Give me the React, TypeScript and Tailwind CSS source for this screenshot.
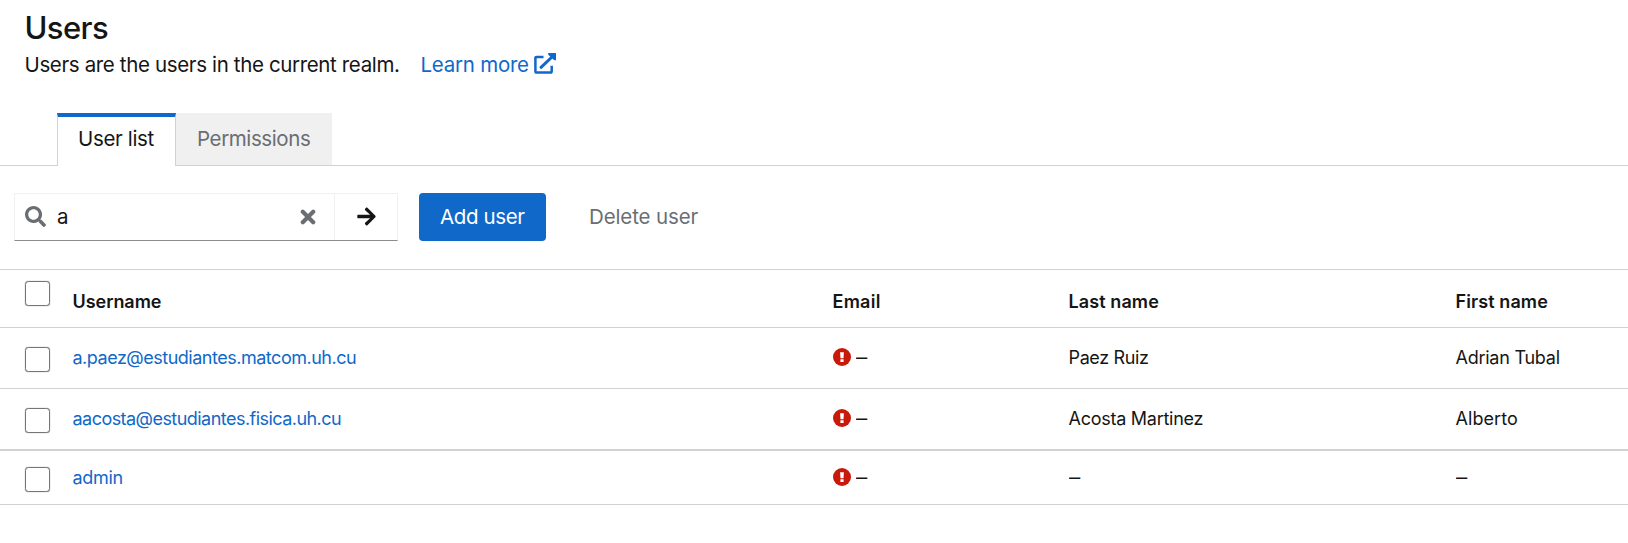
import { FaArrowRight, FaSearch } from "react-icons/fa";

function Checkbox({ className }: { className: string }) {
  return (
    <input
      type="checkbox"
      className={`block h-[25px] w-[25px] shrink-0 appearance-none rounded-[3.5px] border border-[#767676] bg-white shadow-[0_0_1px_#767676] ${className}`}
    />
  );
}

function Dash() {
  return <span className="inline-block origin-left scale-x-[1.25]">–</span>;
}

function ExternalLinkIcon() {
  return (
    <svg viewBox="0 0 22 21" className="mt-[4px] h-[21px] w-[22px]" fill="none" stroke="currentColor">
      <path d="M9.5 3.9H2.7Q1.4 3.9 1.4 5.2V18.2Q1.4 19.5 2.7 19.5H16.4Q17.7 19.5 17.7 18.2V12.8" strokeWidth="2.5" />
      <path d="M7 14.3L18.5 3.5" strokeWidth="3" strokeLinecap="round" />
      <path d="M14.2 0H22V7.2H20.3L14.2 1.8Z" fill="currentColor" stroke="none" />
    </svg>
  );
}

function ExclamationIcon() {
  return (
    <svg viewBox="0 0 18 18" className="mt-[4px] ml-[0.5px] h-[18px] w-[18px]">
      <circle cx="9" cy="9" r="9" fill="#c9190b" />
      <path d="M7.1 4.2H10.9L10.5 10.2H7.5ZM7.4 11.2H10.6V14H7.4Z" fill="#fff" />
    </svg>
  );
}

const grid = "grid grid-cols-[73px_759.5px_236px_387px_1fr] border-[#d2d2d2]";

type User = {
  username: string;
  nameClass: string;
  lastName?: string;
  lastClass: string;
  firstName?: string;
  firstClass: string;
  rowClass: string;
  checkClass: string;
  textClass: string;
};

const users: User[] = [
  {
    username: "a.paez@estudiantes.matcom.uh.cu",
    nameClass: "tracking-[-0.486px]",
    lastName: "Paez Ruiz",
    lastClass: "tracking-[-0.365px]",
    firstName: "Adrian Tubal",
    firstClass: "tracking-[-0.25px]",
    rowClass: "h-[61px] border-b",
    checkClass: "mt-[19px]",
    textClass: "pt-[16px]",
  },
  {
    username: "aacosta@estudiantes.fisica.uh.cu",
    nameClass: "tracking-[-0.539px]",
    lastName: "Acosta Martinez",
    lastClass: "tracking-[-0.263px]",
    firstName: "Alberto",
    firstClass: "tracking-[0.06px]",
    rowClass: "h-[62px] border-b-2",
    checkClass: "mt-[19px]",
    textClass: "pt-[16px]",
  },
  {
    username: "admin",
    nameClass: "tracking-[-0.314px]",
    lastClass: "",
    firstClass: "",
    rowClass: "h-[54px] border-b",
    checkClass: "mt-[16px]",
    textClass: "pt-[13px]",
  },
];

export default function App() {
  return (
    <div className="h-[543px] overflow-hidden bg-white font-['Inter',sans-serif] text-[20.5px] text-[#151515]">
      <header className="flex h-[113px] flex-col pl-[24.5px]">
        <h1 className="mt-[8px] h-10 text-[31px] leading-10 font-medium tracking-[-0.6px]">Users</h1>
        <div className="mt-[1px] flex h-8 leading-8">
          <p className="w-[396px] whitespace-nowrap tracking-[-0.358px]">Users are the users in the current realm.</p>
          <a href="#" className="flex text-[#1068c9]">
            <span className="w-[113.5px] whitespace-nowrap tracking-[-0.25px]">Learn more</span>
            <ExternalLinkIcon />
          </a>
        </div>
      </header>

      <nav className="flex h-[53px]">
        <div className="w-[57px] border-b border-[#d2d2d2]" />
        <button className="w-[119px] border-x border-t-4 border-x-[#d2d2d2] border-t-[#1068c9] pb-[4px] pl-5 text-left whitespace-nowrap tracking-[-0.35px]">
          User list
        </button>
        <button className="w-[156px] border-b border-[#d2d2d2] bg-[#f0f0f0] pl-[21px] text-left whitespace-nowrap tracking-[-0.4px] text-[#6a6e73]">
          Permissions
        </button>
        <div className="flex-1 border-b border-[#d2d2d2]" />
      </nav>

      <div className="flex h-[103px] pt-[27px] pl-[14px]">
        <div className="flex h-12 w-[384px] border border-[#f0f0f0] border-b-[#8a8d90]">
          <div className="flex w-[320px] items-center border-r border-[#f0f0f0]">
            <FaSearch className="mb-[2px] ml-[10px] h-[21px] w-[21px] text-[#6a6e73]" />
            <span className="ml-[11px] flex-1">a</span>
            <svg viewBox="0 0 16 16" className="mr-[18px] mb-[1px] h-4 w-4 text-[#6a6e73]" stroke="currentColor" strokeWidth="4.2" strokeLinecap="round">
              <path d="M2.8 2.8L13.2 13.2M13.2 2.8L2.8 13.2" />
            </svg>
          </div>
          <div className="flex flex-1 items-center justify-center">
            <FaArrowRight className="mb-[1px] h-[21px] w-[21px]" />
          </div>
        </div>
        <button className="ml-[21px] h-12 w-[127px] rounded-[4px] bg-[#1068c9] pl-[21px] text-left whitespace-nowrap tracking-[-0.38px] text-white">
          Add user
        </button>
        <button className="ml-[43px] h-12 whitespace-nowrap tracking-[-0.13px] text-[#6a6e73]">Delete user</button>
      </div>

      <div className="border-t border-[#d2d2d2] text-[18px] leading-[28px]">
        <div className={`${grid} h-[58px] border-b font-semibold whitespace-nowrap [&>span]:pt-[18px]`}>
          <Checkbox className="mt-[11px] ml-[25px]" />
          <span className="-ml-[0.5px] tracking-[-0.05px]">Username</span>
          <span className="tracking-[0.25px]">Email</span>
          <span className="tracking-[0.1px]">Last name</span>
          <span className="tracking-[0.1px]">First name</span>
        </div>
        {users.map((u) => (
          <div key={u.username} className={`${grid} ${u.rowClass} whitespace-nowrap`}>
            <Checkbox className={`ml-[25px] ${u.checkClass}`} />
            <a href="#" className={`-ml-[0.5px] text-[#1068c9] ${u.nameClass} ${u.textClass}`}>
              {u.username}
            </a>
            <span className={`flex items-start ${u.textClass}`}>
              <ExclamationIcon />
              <span className="ml-[5px]">
                <Dash />
              </span>
            </span>
            <span className={`${u.lastClass} ${u.textClass}`}>{u.lastName ?? <Dash />}</span>
            <span className={`${u.firstClass} ${u.textClass}`}>{u.firstName ?? <Dash />}</span>
          </div>
        ))}
      </div>
    </div>
  );
}
